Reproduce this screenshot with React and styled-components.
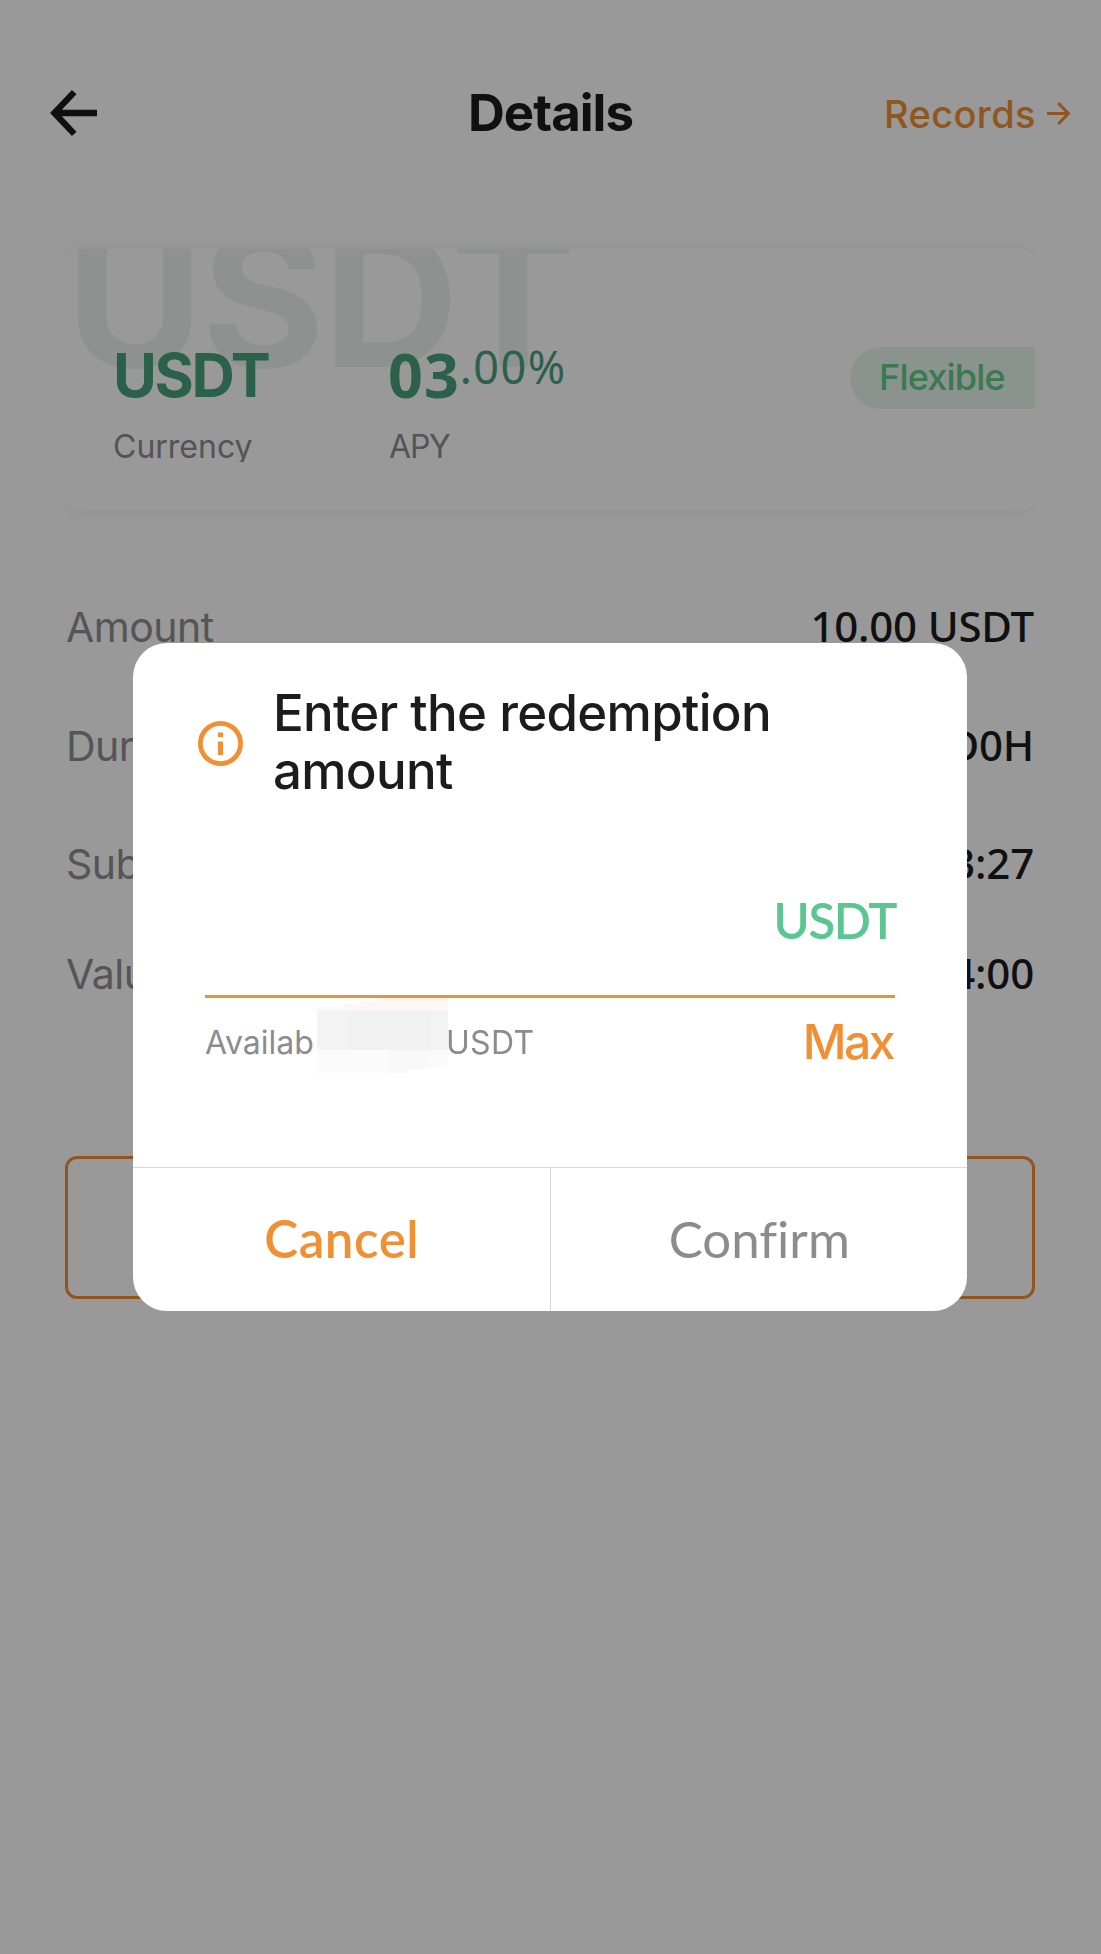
import styled, { createGlobalStyle } from "styled-components";

const GlobalStyle = createGlobalStyle`
  * {
    box-sizing: border-box;
  }
  body {
    margin: 0;
    background: #fff;
    font-family: Inter, "Noto Sans", sans-serif;
    color: #1c1c1c;
  }
  p, h1, h2 {
    margin: 0;
  }
  button {
    background: none;
    border: none;
    padding: 0;
    color: inherit;
  }
`;

const Page = styled.div`
  height: 1954px;
  overflow: hidden;
  display: flex;
  flex-direction: column;
`;

const Header = styled.header`
  display: grid;
  grid-template-columns: 1fr auto 1fr;
  align-items: center;
  height: 100px;
  margin-top: 63px;
  padding: 0 30px 0 50px;
  flex-shrink: 0;
`;

const BackButton = styled.button`
  display: flex;
  justify-self: start;
`;

const PageTitle = styled.h1`
  font-size: 51px;
  font-weight: 700;
  line-height: 60px;
  letter-spacing: -1px;
  /* the side columns have different paddings */
  transform: translateX(-10px);
`;

const RecordsLink = styled.button`
  display: flex;
  align-items: center;
  justify-self: end;
  gap: 11px;
  color: #f09033;

  span {
    font-family: Inter, sans-serif;
    font-size: 38px;
    font-weight: 500;
    line-height: 46px;
    letter-spacing: 0.4px;
    padding-top: 2px;
  }
`;

/* Cuts the card shadow off at the left and right edges */
const CardClip = styled.div`
  margin: 65px 66px 0 65px;
  padding: 21px 0 20px;
  overflow: hidden;
  flex-shrink: 0;
`;

const Card = styled.section`
  position: relative;
  display: flex;
  align-items: flex-start;
  height: 261px;
  padding: 90px 0 0 48px;
  border-radius: 14px;
  background: #fff;
  overflow: hidden;
  box-shadow: 0 0 20px rgba(0, 0, 0, 0.05);
`;

const Watermark = styled.span`
  position: absolute;
  left: 1px;
  top: -44px;
  font-size: 188px;
  font-weight: 700;
  line-height: 188px;
  letter-spacing: -2px;
  color: #ebf3f0;
`;

const Stat = styled.div`
  position: relative;
  width: ${({ $width }) => $width}px;
`;

const StatValue = styled.div`
  display: flex;
  align-items: flex-start;
  font-family: ${({ $numeric }) => ($numeric ? '"Noto Sans"' : "Inter")}, sans-serif;
  font-size: ${({ $numeric }) => ($numeric ? 61 : 60)}px;
  font-weight: 700;
  line-height: 72px;
  letter-spacing: ${({ $numeric }) => ($numeric ? 1 : -2.3)}px;
  margin-left: ${({ $numeric }) => ($numeric ? -1 : 0)}px;
  color: #49a27d;
`;

const Decimals = styled.span`
  font-size: 45px;
  font-weight: 400;
  line-height: 56px;
  letter-spacing: 1.5px;
`;

const StatLabel = styled.p`
  height: 35px;
  margin-top: 16px;
  overflow: hidden;
  font-size: 32px;
  line-height: 40px;
  letter-spacing: ${({ $spacing }) => $spacing || 0}px;
  color: #8c8c8f;
`;

const Tag = styled.span`
  position: relative;
  width: 185px;
  height: 62px;
  margin: 8px 0 0 auto;
  padding-left: 29px;
  border-radius: 31px 0 0 31px;
  background: #e6f5ec;
  color: #61cb85;
  font-size: 36px;
  font-weight: 500;
  line-height: 60px;
  letter-spacing: -0.8px;
`;

const DetailList = styled.div`
  margin: 67px 67px 0 66px;
`;

const DetailRow = styled.div`
  display: flex;
  justify-content: space-between;
  height: ${({ $height }) => $height || 118.5}px;
`;

const DetailLabel = styled.span`
  font-size: 41px;
  line-height: 60px;
  letter-spacing: -0.5px;
  color: #8e8e91;
`;

const DetailValue = styled.span`
  font-family: "Noto Sans", sans-serif;
  font-size: 42px;
  font-weight: 500;
  line-height: 57px;
  letter-spacing: -0.2px;
`;

const OutlineButton = styled.button`
  height: 143px;
  margin: 94px 66px 0 65px;
  border: 3px solid #f09033;
  border-radius: 12px;
  flex-shrink: 0;
  font-size: 46px;
  color: #f09033;
`;

const Overlay = styled.div`
  position: fixed;
  inset: 0;
  display: flex;
  align-items: center;
  justify-content: center;
  padding-right: 1px;
  background: rgba(0, 0, 0, 0.4);
`;

const Dialog = styled.div`
  display: flex;
  flex-direction: column;
  width: 834px;
  height: 668px;
  border-radius: 34px;
  background: #fff;
  overflow: hidden;
`;

const DialogHead = styled.div`
  display: flex;
  align-items: center;
  gap: 30px;
  padding: 41px 72px 0 65px;

  svg {
    flex-shrink: 0;
    margin-top: 3px;
  }
`;

const DialogTitle = styled.h2`
  font-size: 51px;
  font-weight: 500;
  line-height: 58px;
  letter-spacing: -0.7px;
`;

const AmountField = styled.div`
  display: flex;
  align-items: center;
  height: 154px;
  margin: 44px 72px 0;
  border-bottom: 3px solid #f09033;

  input {
    flex: 1;
    min-width: 0;
    border: none;
    outline: none;
    font-size: 49px;
  }
`;

const Unit = styled.span`
  font-family: Lato, sans-serif;
  font-size: 49px;
  font-weight: 600;
  letter-spacing: -1.4px;
  margin-right: -1px;
  color: #5ac690;
`;

const AvailableRow = styled.div`
  display: flex;
  align-items: center;
  height: 88px;
  margin: 0 72px;
  font-size: 32px;
  color: #8c8c8f;

  svg {
    align-self: flex-start;
  }
`;

const AvailableLabel = styled.span`
  width: 112px;
  white-space: nowrap;
`;

const AvailableUnit = styled.span`
  margin-left: -2px;
  letter-spacing: 0.3px;
`;

const MaxButton = styled.button`
  margin: -1px 2px 0 auto;
  font-family: Inter, sans-serif;
  font-size: 48px;
  font-weight: 500;
  letter-spacing: -2.5px;
  color: #f09033;
`;

const Actions = styled.div`
  display: flex;
  flex: 1;
  margin-top: 81px;
  border-top: 1px solid #d8d8d8;
`;

const ActionButton = styled.button`
  flex: 1;
  padding: 0 0 3px 1px;
  font-family: Lato, sans-serif;
  font-size: 51px;
  font-weight: ${({ $primary }) => ($primary ? 600 : 400)};
  font-variant-ligatures: none;
  letter-spacing: ${({ $primary }) => ($primary ? 0.6 : 0)}px;
  color: ${({ $primary }) => ($primary ? "#f09033" : "#8c8c8f")};

  & + & {
    border-left: 1px solid #d8d8d8;
  }
`;

const details = [
  { label: "Amount", value: "10.00 USDT" },
  { label: "Duration", value: "0D0H" },
  { label: "Subscription Date", value: "13:27", height: 109.5 },
  { label: "Value Date", value: "04:00" },
];

function BackIcon() {
  return (
    <svg width="47" height="46" viewBox="0 0 47 46" fill="none" stroke="#1a1a1a" strokeWidth="6.3">
      <path d="M47 23H5M24.2 2.2 4.4 23l19.8 20.8" />
    </svg>
  );
}

function ForwardIcon() {
  return (
    <svg width="24" height="23" viewBox="0 0 24 23" fill="none" stroke="currentColor" strokeWidth="3">
      <path d="M0 11.5h21.5M11.3 1.1l10.2 10.4-10.2 10.4" />
    </svg>
  );
}

function InfoIcon() {
  return (
    <svg width="45" height="45" viewBox="0 0 45 45" fill="none">
      <circle cx="22.5" cy="22.5" r="20.1" stroke="#f09033" strokeWidth="4.8" />
      <path d="M20 11.5h5V16h-5zM20 20.5h5V34h-5z" fill="#f09033" />
    </svg>
  );
}

// Blocks that hide the balance
function HiddenBalance() {
  return (
    <svg width="131" height="75" viewBox="0 0 131 75">
      <path d="M0 9h26V6h16V3h20V0h69v13H0z" fill="#fef7f4" />
      <path d="M0 52h131v13h-4v4h-19v3H92v3H0z" fill="#fbfbfb" />
      <path d="M71 52h42v17h-5v3H92v3H71z" fill="#f9f9f9" />
      <path d="M0 12.5h131V52H0z" fill="#f3f3f3" />
      <path d="M31 12.5h82V52H31z" fill="#f1f1f1" />
    </svg>
  );
}

export default function App() {
  return (
    <>
      <GlobalStyle />
      <Page>
        <Header>
          <BackButton aria-label="Back">
            <BackIcon />
          </BackButton>
          <PageTitle>Details</PageTitle>
          <RecordsLink>
            <span>Records</span>
            <ForwardIcon />
          </RecordsLink>
        </Header>
        <CardClip>
          <Card>
            <Watermark>USDT</Watermark>
            <Stat $width={276}>
              <StatValue>USDT</StatValue>
              <StatLabel>Currency</StatLabel>
            </Stat>
            <Stat $width={200}>
              <StatValue $numeric>
                03<Decimals>.00%</Decimals>
              </StatValue>
              <StatLabel $spacing={-1.2}>APY</StatLabel>
            </Stat>
            <Tag>Flexible</Tag>
          </Card>
        </CardClip>
        <DetailList>
          {details.map((item) => (
            <DetailRow key={item.label} $height={item.height}>
              <DetailLabel>{item.label}</DetailLabel>
              <DetailValue>{item.value}</DetailValue>
            </DetailRow>
          ))}
        </DetailList>
        <OutlineButton>Redeem</OutlineButton>
      </Page>
      <Overlay>
        <Dialog role="dialog">
          <DialogHead>
            <InfoIcon />
            <DialogTitle>Enter the redemption amount</DialogTitle>
          </DialogHead>
          <AmountField>
            <input aria-label="Amount" />
            <Unit>USDT</Unit>
          </AmountField>
          <AvailableRow>
            <AvailableLabel>Availab</AvailableLabel>
            <HiddenBalance />
            <AvailableUnit>USDT</AvailableUnit>
            <MaxButton>Max</MaxButton>
          </AvailableRow>
          <Actions>
            <ActionButton $primary>Cancel</ActionButton>
            <ActionButton>Confirm</ActionButton>
          </Actions>
        </Dialog>
      </Overlay>
    </>
  );
}
